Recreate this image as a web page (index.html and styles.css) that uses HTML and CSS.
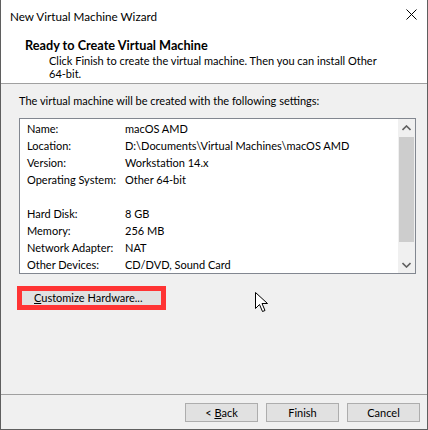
FILE: index.html
```html
<!DOCTYPE html>
<html>
<head>
<meta charset="utf-8">
<link rel="stylesheet" href="styles.css">
</head>
<body>
<div class="window">
  <div class="titlebar">
    <span class="title">New Virtual Machine Wizard</span>
    <svg class="close" width="11" height="11" viewBox="0 0 11 11"><path d="M0.5 0.5 L10.5 10.5 M10.5 0.5 L0.5 10.5" stroke="#000" stroke-width="1" fill="none"/></svg>
  </div>
  <div class="header">
    <div class="h-title">Ready to Create Virtual Machine</div>
    <div class="h-sub">Click Finish to create the virtual machine. Then you can install Other<br>64-bit.</div>
  </div>
  <div class="body">
    <div class="intro">The virtual machine will be created with the following settings:</div>
    <div class="listbox">
      <div class="list">
        <div class="row"><span class="k">Name:</span><span class="v">macOS AMD</span></div>
        <div class="row"><span class="k">Location:</span><span class="v">D:\Documents\Virtual Machines\macOS AMD</span></div>
        <div class="row"><span class="k">Version:</span><span class="v">Workstation 14.x</span></div>
        <div class="row"><span class="k">Operating System:</span><span class="v">Other 64-bit</span></div>
        <div class="row"></div>
        <div class="row"><span class="k">Hard Disk:</span><span class="v">8 GB</span></div>
        <div class="row"><span class="k">Memory:</span><span class="v">256 MB</span></div>
        <div class="row"><span class="k">Network Adapter:</span><span class="v">NAT</span></div>
        <div class="row"><span class="k">Other Devices:</span><span class="v">CD/DVD, Sound Card</span></div>
      </div>
      <div class="scrollbar">
        <div class="sb-btn"><svg width="9" height="6" viewBox="0 0 9 6"><path d="M0.5 5 L4.5 1 L8.5 5" stroke="#606060" stroke-width="1.6" fill="none"/></svg></div>
        <div class="sb-thumb"></div>
        <div class="sb-track"></div>
        <div class="sb-btn"><svg width="9" height="6" viewBox="0 0 9 6"><path d="M0.5 1 L4.5 5 L8.5 1" stroke="#606060" stroke-width="1.6" fill="none"/></svg></div>
      </div>
    </div>
    <div class="custom-row">
      <button class="btn custom"><u>C</u>ustomize Hardware...</button>
    </div>
    <svg class="cursor" width="14" height="22" viewBox="0 0 14 22"><path d="M0.5 0.5 L0.5 16.5 L4.5 12.5 L7.5 19.5 L10 18.5 L7 11.5 L12.5 11.5 Z" fill="#fff" stroke="#000" stroke-width="1" stroke-linejoin="miter"/></svg>
  </div>
  <div class="footer">
    <button class="btn">&lt; <u>B</u>ack</button>
    <button class="btn">Finish</button>
    <button class="btn">Cancel</button>
  </div>
</div>
</body>
</html>
```
FILE: styles.css
```css
* { box-sizing: border-box; }
html, body { margin: 0; padding: 0; }
body {
  font-family: Lato, "Noto Sans", sans-serif;
  font-size: 11px;
  color: #000;
  background: #fff;
}
.window {
  width: 428px;
  height: 430px;
  border: 1px solid #5f5f5f;
  border-top: none;
  display: flex;
  flex-direction: column;
  background: #f0f0f0;
}
.titlebar {
  height: 32px;
  background: #fff;
  display: flex;
  align-items: center;
  justify-content: space-between;
  padding: 0 10px 0 9px;
}
.title { font-size: 11.7px; line-height: 16px; padding-bottom: 1px; white-space: nowrap; }
.close { margin-top: -3px; }
.header {
  height: 52px;
  background: #fff;
  border-bottom: 1px solid #a0a0a0;
  padding: 6px 0 0 24px;
  white-space: nowrap;
}
.h-title { font-weight: bold; font-size: 12.7px; line-height: 14px; }
.h-sub { padding-left: 24px; line-height: 13px; margin-top: 2px; }
.body {
  position: relative;
  flex: 1;
  padding: 9px 11px 0 18px;
}
.intro { line-height: 16px; white-space: nowrap; }
.listbox {
  margin-top: 9px;
  height: 156px;
  background: #fff;
  border: 1px solid #828790;
  display: flex;
}
.list { flex: 1; padding: 1px 0 0 7px; }
.row { height: 17px; line-height: 17px; display: flex; white-space: nowrap; }
.k { width: 98px; flex: none; }
.scrollbar {
  width: 17px;
  background: #f0f0f0;
  display: flex;
  flex-direction: column;
}
.sb-btn { height: 17px; display: flex; align-items: center; justify-content: center; }
.sb-thumb { margin: 1px 1px 0 1px; height: 105px; background: #cdcdcd; }
.sb-track { flex: 1; }
.custom-row { margin-top: 12px; }
.btn {
  font-family: inherit;
  font-size: 11px;
  color: #000;
  background: #e1e1e1;
  border: 1px solid #adadad;
  width: 73px;
  height: 19px;
  padding: 0;
  line-height: 16px;
  white-space: nowrap;
}
.custom {
  margin-left: -2px;
  width: 149px;
  height: 24px;
  border: 5px solid #ff3434;
  text-align: left;
  padding-left: 12px;
  line-height: 12px;
}
.cursor { position: absolute; left: 254px; top: 208px; }
.footer {
  height: 35px;
  border-top: 1px solid #a0a0a0;
  display: flex;
  justify-content: flex-end;
  gap: 8px;
  padding: 8px 7px 0 0;
}
```
